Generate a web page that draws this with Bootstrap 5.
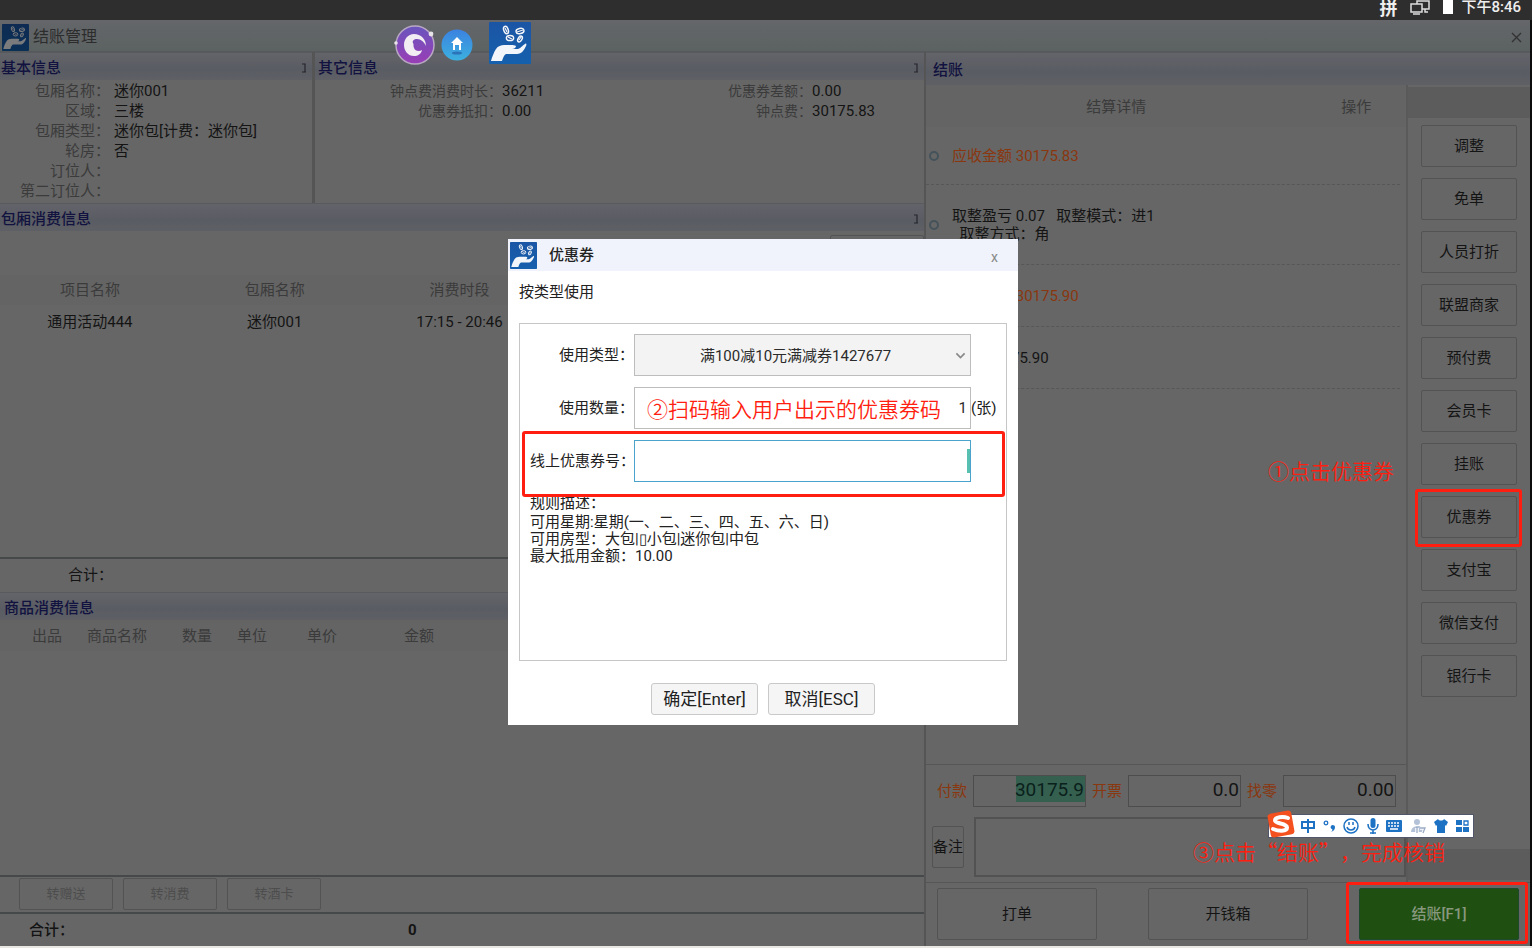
<!DOCTYPE html>
<html lang="zh-CN">
<head>
<meta charset="utf-8">
<meta name="viewport" content="width=device-width, initial-scale=1">
<title>结账管理</title>
<link href="https://cdn.jsdelivr.net/npm/bootstrap@5.3.0/dist/css/bootstrap.min.css" rel="stylesheet">
<style>
:root{--ink:#141414;--dim:#3b3b3b;--base:#666;--alert:#ff1e10}
body{font:15px/20px Roboto,"Noto Sans CJK SC",sans-serif;color:var(--ink);background:#e9e7e4}
.screen{min-height:100vh;padding-bottom:2px;position:relative}
.statusbar{height:20px;background:#2e2e2e;color:#eee;padding-right:11px;font-weight:500;line-height:14px}
.ime-flag{font-size:18px;font-weight:700;line-height:18px}
.desk{background:var(--base);border-right:2px solid #0c0c0c}
.titlebar{height:32px;background:linear-gradient(#64666a,#5c6262);border-bottom:1px solid #56595c;color:#2c2c2c;font-size:16px;padding:3px 8px 0 2px}
.titlebar .app-icon{filter:brightness(.5)}
.btn-close-x{background:none;border:0;padding:0;line-height:1;color:#333}
.workspace{display:grid;grid-template-columns:minmax(0,926fr) minmax(0,604fr)}
.left-side{border-right:2px solid #555}
.pane-head{height:28px;background:linear-gradient(#63646a,#5a5c63 60%,#5e6066);color:#11123f;font-size:15px;font-weight:500;padding:3px 5px 0 1px;border-top:1px solid #585a5e;margin:0;line-height:24px}
.info-grid{display:grid;grid-template-columns:312fr 612fr;height:151px}
.info-grid>section+section{border-left:3px solid #555}
.info-grid .other-title{padding-left:3px}
.facts{display:grid;grid-template-columns:110px 1fr;column-gap:4px;margin:0;padding-top:1px}
.facts dt{font-weight:400;text-align:right;color:var(--dim)}
.facts dd{margin:0;min-height:20px}
.facts-wide{grid-template-columns:187px 191fr 114px 109fr;column-gap:0}
.facts-wide dt{font-size:14px}
.grid-table{width:100%;table-layout:fixed;text-align:center}
.grid-table th{font-weight:400;color:var(--dim);background:#646464;padding:0}
.grid-table td{padding:0}
.room-table th{height:30px;padding-right:5px}
.room-table td{height:34px;padding-right:5px}
.goods-table th{height:31px}
.rule-top{border-top:2px solid #464949}
.room-total{padding:6px 0 7px 68px}
.dim-btn{background:#666;border:1px solid #535353;border-radius:2px;color:var(--ink);font-size:15px;line-height:20px;padding:0}
.dim-btn:hover{background:#707070}
.transfer{width:94px;height:32px;font-size:13px;color:#4d4d4d}
.pay-head{height:33px;padding:5px 0 0 7px}
.pay-body{display:grid;grid-template-columns:minmax(0,1fr) 122px}
.pay-list{border-right:2px solid #5a5a5a}
.list-head{display:grid;grid-template-columns:382fr 100fr;height:42px;line-height:44px;color:var(--dim);text-align:center;background:#646464}
.pay-item{border-bottom:1px dashed #575757;margin-right:6px;padding-left:3px;gap:13px;line-height:18px}
.item-s{height:58px}
.item-l{height:80px}
.item-m{height:62px}
.ring{width:10px;height:10px;border:2px solid #44525a;border-radius:50%;flex:none}
.accent{color:#8a370f}
.money{flex:1 1 0;background:transparent;border:1px solid #4d4d4d;border-radius:0;height:32px;padding:0 1px 3px;text-align:right;font-size:19px;color:var(--ink);min-width:0}
.money-picked{background:linear-gradient(#35604f,#35604f) right top/69px 26px no-repeat;color:#0b201c}
.pay-fields{border-top:1px solid #565656;padding:10px 10px 10px 11px;gap:6px}
.pay-fields label{flex:none}
.note{height:60px;border:2px solid #525252;border-radius:0;background:transparent;resize:none}
.note-row{padding:0 0 5px 6px;gap:10px}
.note-btn{width:32px;height:42px}
.side-menu{padding:2px 0}
.strip{height:31px;background:#5c5c5c}
.side-menu .stack{padding:7px 13px 0;gap:11px}
.side-menu .dim-btn{height:42px;width:100%}
.bottom-bar{border-top:1px solid #565656;padding:5px 11px 6px 11px}
.bottom-bar .dim-btn{width:160px;height:52px}
.bottom-bar .checkout{background:#1f5011;border-color:#1d4a2c;color:#88987f;font-weight:500}
.goods{height:354px}
.goods-actions{height:37px;padding:1px 0 0 19px;gap:10px}
.goods-total{height:34px;line-height:32px;padding-left:29px}
.goods-total span{width:379px}
.hint{position:absolute;color:var(--alert);font:350 21px/24px "Noto Sans CJK SC",sans-serif;text-spacing-trim:space-all;white-space:nowrap;z-index:5;pointer-events:none}
.frame{position:absolute;border:3px solid var(--alert);border-radius:3px;pointer-events:none;z-index:4}
.frame-coupon{inset:-7px -5px -9px -6px}
.frame-checkout{inset:-6px -9px -4px -13px}
.hint-coupon{right:calc(100% + 27px);top:-38px}
.hint-checkout{right:74px;bottom:calc(100% + 25px)}
.launcher{position:absolute;top:22px;left:393px;z-index:3}
.dialog-layer{position:absolute;inset:0;padding:16px 6px 0 0;pointer-events:none;z-index:2}
.dialog{width:510px;background:#fff;pointer-events:auto;color:#222}
.dialog header{height:32px;background:#f0f3fb;padding:0 20px 0 2px}
.dialog h1{font-size:15px;margin:0;font-weight:500;line-height:20px}
.dialog .btn-close-x{color:#888;font-size:14px;padding-top:4px}
.tab-name{padding:11px 11px 21px;line-height:20px}
.coupon-box{border:1px solid #c6c6c6;height:338px;padding:10px 0 0 10px;margin:0 11px}
.field{display:grid;grid-template-columns:104px 337px 1fr;height:42px;margin-bottom:11px;align-items:center;position:relative}
.field label{text-align:right;white-space:nowrap}
.field .form-control,.field .form-select{height:42px;border-radius:0;border-color:#bdbdbd;font-size:15px;color:#2b2b2b;text-align:right;padding:0 3px;box-shadow:none}
.field .form-select{text-align:center;text-align-last:center;background-color:#f3f3f3;background-size:11px;background-position:right 4px center;padding:2px 18px 0 4px;--bs-form-select-bg-img:url("data:image/svg+xml,%3csvg xmlns='http://www.w3.org/2000/svg' viewBox='0 0 16 16'%3e%3cpath fill='none' stroke='%23888' stroke-width='2.4' d='m2 5 6 6 6-6'/%3e%3c/svg%3e")}
.field .active-input{border-color:#4ba3cc;background:linear-gradient(#58c0b0,#58c0b0) right center/3px 24px no-repeat}
.frame-number{inset:-9px 1px -15px -8px}
.hint-number{left:117px;top:9px}
.rules-title{line-height:20px;margin:0}
.rules{line-height:17px;margin:1px 0 0}
.dialog-actions{gap:10px;padding:22px 0 10px}
.light-btn{width:107px;height:32px;background:#f5f5f5;border:1px solid #c9c9c9;border-radius:3px;font-size:17px;line-height:20px;color:#222;padding:0}
.ime{position:absolute;right:58px;bottom:110px;height:24px;width:206px;background:#fff;border:1px solid #51566a;z-index:6;padding:0 4px 0 32px}
.ime-logo{position:absolute;left:-2px;top:-5px}
</style>
</head>
<body>
<svg width="0" height="0" class="position-absolute" aria-hidden="true">
  <defs><linearGradient id="blue" x2="0" y2="1"><stop stop-color="#1b55a5"/><stop offset="1" stop-color="#1560ad"/></linearGradient></defs>
  <symbol id="hand" viewBox="0 0 42 42">
    <rect width="42" height="42" rx="1" fill="url(#blue)"/>
    <path fill="#f2f5fa" d="M2 39c1-4 3-9 5-12 2-3 5-4 8-4h7c2 0 4 0 5 1 0 2-2 3-4 3h6c3-1 5-4 7-5 1-1 2 0 1 2-2 4-4 8-9 8H17c-2 1-3 4-4 7z"/>
    <g fill="#174e99" stroke="#f2f5fa" stroke-width="1.500"><ellipse cx="17" cy="8" rx="2.200" ry="3.800" transform="rotate(-20 17 8)"/><ellipse cx="31" cy="9" rx="4" ry="2.600" transform="rotate(-12 31 9)"/><ellipse cx="21" cy="16" rx="3.600" ry="2.600"/><ellipse cx="31" cy="17" rx="1.900" ry="3.200" transform="rotate(30 31 17)"/></g>
    <path stroke="#f2f5fa" stroke-width="1.200" d="m16 6 2 4m10 0 6-2m-15 7 4 2m7 1 2-3"/>
  </symbol>
  <symbol id="pin" viewBox="0 0 6 10"><path fill="none" stroke="#25262d" stroke-width="1.200" d="M1 1h3v8M1 9h4"/></symbol>
</svg>
<div class="screen d-flex flex-column">
  <div class="statusbar d-flex justify-content-end align-items-start flex-shrink-0">
    <span class="ime-flag me-2 pe-1">拼</span>
    <svg class="me-2 pe-1" width="26" height="16" viewBox="0 0 22 16" fill="#2e2e2e" stroke="#ddd" stroke-width="1.500"><path d="M8 1h12v8H8zM16 9v3h3"/><path d="M2 4h11v8H2zM4 14h7"/></svg>
    <svg class="me-2" width="10" height="14"><path fill="#fff" d="M0 0h10v14H0z"/></svg>
    <span>下午8:46</span>
  </div>
  <div class="desk flex-grow-1 d-flex flex-column">
    <div class="titlebar d-flex align-items-center flex-shrink-0">
      <svg width="27" height="27" class="app-icon me-1"><use href="#hand"/></svg><span>结账管理</span>
      <button class="btn-close-x ms-auto" type="button" aria-label="关闭"><svg width="11" height="11" viewBox="0 0 11 11" stroke="#333" stroke-width="1.400"><path d="m1 1 9 9m0-9-9 9"/></svg></button>
    </div>
    <div class="workspace flex-grow-1">
      <div class="left-side d-flex flex-column">
        <div class="info-grid">
          <section>
            <h2 class="pane-head d-flex align-items-center justify-content-between">基本信息 <svg width="6" height="10"><use href="#pin"/></svg></h2>
            <dl class="facts">
              <dt>包厢名称：</dt><dd>迷你001</dd><dt>区域：</dt><dd>三楼</dd><dt>包厢类型：</dt><dd>迷你包[计费：迷你包]</dd><dt>轮房：</dt><dd>否</dd><dt>订位人：</dt><dd></dd><dt>第二订位人：</dt><dd></dd>
            </dl>
          </section>
          <section>
            <h2 class="pane-head other-title d-flex align-items-center justify-content-between">其它信息 <svg width="6" height="10"><use href="#pin"/></svg></h2>
            <dl class="facts facts-wide">
              <dt>钟点费消费时长：</dt><dd>36211</dd><dt>优惠券差额：</dt><dd>0.00</dd><dt>优惠券抵扣：</dt><dd>0.00</dd><dt>钟点费：</dt><dd>30175.83</dd>
            </dl>
          </section>
        </div>
        <section class="d-flex flex-column flex-grow-1">
          <h2 class="pane-head d-flex align-items-center justify-content-between">包厢消费信息 <svg width="6" height="10"><use href="#pin"/></svg></h2>
          <div class="d-flex justify-content-end pt-1 pb-2"><button type="button" class="dim-btn transfer" aria-label="明细"></button></div>
          <table class="grid-table room-table">
            <thead><tr><th>项目名称</th><th>包厢名称</th><th>消费时段</th><th></th><th></th></tr></thead>
            <tbody><tr><td>通用活动444</td><td>迷你001</td><td>17:15 - 20:46</td><td></td><td></td></tr></tbody>
          </table>
          <div class="rule-top room-total mt-auto">合计：</div>
        </section>
        <section class="d-flex flex-column goods">
          <h2 class="pane-head ps-1">商品消费信息</h2>
          <table class="grid-table goods-table">
            <colgroup><col width="20"><col width="54"><col width="86"><col width="74"><col width="36"><col width="104"><col width="90"><col></colgroup>
            <thead><tr><th></th><th>出品</th><th>商品名称</th><th>数量</th><th>单位</th><th>单价</th><th>金额</th><th></th></tr></thead>
          </table>
          <div class="rule-top goods-actions d-flex mt-auto">
            <button type="button" class="dim-btn transfer">转赠送</button><button type="button" class="dim-btn transfer">转消费</button><button type="button" class="dim-btn transfer">转酒卡</button>
          </div>
          <div class="rule-top goods-total d-flex fw-medium"><span>合计：</span><b>0</b></div>
        </section>
      </div>
      <div class="d-flex flex-column">
        <h2 class="pane-head pay-head">结账</h2>
        <div class="pay-body flex-grow-1">
          <div class="pay-list d-flex flex-column">
            <div class="list-head"><span>结算详情</span><span>操作</span></div>
            <div class="pay-item item-s d-flex align-items-center accent"><i class="ring"></i><span>应收金额 30175.83</span></div>
            <div class="pay-item item-l d-flex align-items-center"><i class="ring"></i><span>取整盈亏 0.07 &nbsp; 取整模式：进1<br>&nbsp; 取整方式：角</span></div>
            <div class="pay-item item-m d-flex align-items-center accent"><i class="ring"></i><span>实收金额 30175.90</span></div>
            <div class="pay-item item-m d-flex align-items-center"><i class="ring"></i><span>未付 30175.90</span></div>
            <div class="mt-auto">
              <div class="pay-fields d-flex align-items-center">
                <label for="paid" class="accent">付款</label><input id="paid" class="money money-picked" value="30175.9">
                <label for="inv" class="accent">开票</label><input id="inv" class="money" value="0.0">
                <label for="chg" class="accent">找零</label><input id="chg" class="money" value="0.00">
              </div>
              <div class="note-row d-flex align-items-center">
                <button type="button" class="dim-btn note-btn">备注</button>
                <textarea class="note flex-grow-1" aria-label="备注内容"></textarea>
              </div>
            </div>
          </div>
          <nav class="side-menu d-flex flex-column">
            <div class="strip"></div>
            <div class="stack d-flex flex-column">
              <button type="button" class="dim-btn">调整</button>
              <button type="button" class="dim-btn">免单</button>
              <button type="button" class="dim-btn">人员打折</button>
              <button type="button" class="dim-btn">联盟商家</button>
              <button type="button" class="dim-btn">预付费</button>
              <button type="button" class="dim-btn">会员卡</button>
              <button type="button" class="dim-btn">挂账</button>
              <div class="position-relative"><button type="button" class="dim-btn">优惠券</button><span class="frame frame-coupon"></span><span class="hint hint-coupon">①点击优惠券</span></div>
              <button type="button" class="dim-btn">支付宝</button>
              <button type="button" class="dim-btn">微信支付</button>
              <button type="button" class="dim-btn">银行卡</button>
            </div>
            <div class="strip mt-auto"></div>
          </nav>
        </div>
        <div class="bottom-bar d-flex justify-content-between">
          <button type="button" class="dim-btn">打单</button>
          <button type="button" class="dim-btn">开钱箱</button>
          <div class="position-relative"><button type="button" class="dim-btn checkout">结账[F1]</button><span class="frame frame-checkout"></span><span class="hint hint-checkout">③点击“结账”，完成核销</span></div>
        </div>
      </div>
    </div>
  </div>

  <div class="launcher d-flex align-items-center">
    <svg width="44" height="44" viewBox="0 0 44 44"><defs><linearGradient id="pu" x2="0" y2="1"><stop stop-color="#6a55bd"/><stop offset="1" stop-color="#9a3db5"/></linearGradient></defs><circle cx="22" cy="22" r="19" fill="url(#pu)" stroke="#b9a8c4" stroke-width="1.500"/><path fill="#f1edf3" d="M33 23c0-7-5-12-12-12-6 0-10 5-10 11s4 11 10 11c4 0 7-2 8-6-3 2-7 1-8-2-1-2 0-4-1-5-1-2 1-4 4-4 4 0 7 3 9 7z"/><circle cx="38" cy="11" r="2.400" fill="#e8e4ea"/><circle cx="3" cy="20" r="1.800" fill="#e8e4ea"/></svg>
    <svg class="ms-1" width="32" height="32" viewBox="0 0 32 32"><defs><linearGradient id="sky" x2="0" y2="1"><stop stop-color="#3b82e0"/><stop offset="1" stop-color="#3cb0df"/></linearGradient></defs><circle cx="16" cy="16" r="15.500" fill="url(#sky)"/><path fill="#fff" d="m16 8 6 6h-2v7h-2v-5h-4v5h-2v-7h-2z"/><ellipse cx="16" cy="24" rx="5" ry="1.500" fill="#2b74b8"/></svg>
    <svg class="ms-3 mb-1" width="42" height="42"><use href="#hand"/></svg>
  </div>

  <div class="dialog-layer d-flex align-items-center justify-content-center">
    <form class="dialog" role="dialog" aria-labelledby="dlg">
      <header class="d-flex align-items-center"><svg width="27" height="27"><use href="#hand"/></svg><h1 id="dlg" class="ms-2 ps-1">优惠券</h1><button type="button" class="btn-close-x ms-auto" aria-label="关闭">x</button></header>
      <div class="tab-name">按类型使用</div>
      <div class="coupon-box">
        <div class="field"><label for="kind">使用类型：</label><select id="kind" class="form-select"><option>满100减10元满减券1427677</option></select></div>
        <div class="field"><label for="qty">使用数量：</label><input id="qty" class="form-control" value="1"><span>(张)</span><span class="hint hint-number">②扫码输入用户出示的优惠券码</span></div>
        <div class="field"><label for="code">线上优惠券号：</label><input id="code" class="form-control active-input"><span class="frame frame-number"></span></div>
        <p class="rules-title">规则描述：</p>
        <p class="rules">可用星期:星期(一、二、三、四、五、六、日)<br>可用房型：大包|▯小包|迷你包|中包<br>最大抵用金额：10.00</p>
      </div>
      <div class="dialog-actions d-flex justify-content-center"><button type="submit" class="light-btn">确定[Enter]</button><button type="button" class="light-btn">取消[ESC]</button></div>
    </form>
  </div>

  <div class="ime d-flex align-items-center justify-content-between">
    <svg class="ime-logo" width="28" height="28" viewBox="0 0 28 28"><rect x="2" y="2" width="24" height="24" rx="3" fill="#f4511e" transform="rotate(-10 14 14)"/><path fill="none" stroke="#fff" stroke-width="4" stroke-linecap="round" d="M21 8c-5-2-13-1-13 2.500S20 13 20 17.500 11 21 6 19"/></svg>
    <svg width="14" height="16" viewBox="0 0 14 16" fill="none" stroke="#1d72c4" stroke-width="2"><path d="M1 4h12v6H1zM7 1v14"/></svg>
    <svg width="13" height="14" viewBox="0 0 13 14"><circle cx="3" cy="4" r="1.800" fill="none" stroke="#1d72c4" stroke-width="1.300"/><path fill="#1d72c4" d="M8 7c1-2 4-1 4 1s-1 4-4 5c1-1 2-2 1-3-1 0-2-2-1-3z"/></svg>
    <svg width="16" height="16" viewBox="0 0 16 16" fill="none" stroke="#1d72c4" stroke-width="1.500"><circle cx="8" cy="8" r="7"/><path d="M4 9c1 4 7 4 8 0M6 4v3m4-3v3"/></svg>
    <svg width="12" height="16" viewBox="0 0 12 16"><rect x="3.500" width="5" height="10" rx="2.500" fill="#1d72c4"/><path fill="none" stroke="#1d72c4" stroke-width="1.600" d="M1 6c0 8 10 8 10 0M6 12v4M3 15h6"/></svg>
    <svg width="16" height="12" viewBox="0 0 16 12"><rect width="16" height="12" rx="1" fill="#1d72c4"/><path stroke="#fff" stroke-width="1.500" stroke-dasharray="2 1" d="M2 3h12M2 6h12"/><path stroke="#fff" stroke-width="1.500" d="M4 9h8"/></svg>
    <svg width="17" height="16" viewBox="0 0 17 16"><circle cx="7" cy="4" r="3" fill="#b4c2d8"/><path fill="#b4c2d8" d="M1 14c0-7 12-8 12-2v2z"/><path fill="none" stroke="#fff" stroke-width="3.500" d="M7 10v6m3-6h5l-2 6"/><path fill="none" stroke="#9aaac4" stroke-width="1.300" d="M7 9v6m3-5h5l-2 5"/></svg>
    <svg width="14" height="14" viewBox="0 0 14 14"><path fill="#1d72c4" d="M4 0c1 2 5 2 6 0l4 3-2 4-1-1v8H3V6L2 7 0 3z"/></svg>
    <svg width="13" height="14" viewBox="0 0 13 14" fill="#1d72c4"><path d="M0 1h6v5H0zM0 8h6v5H0zm7 0h6v5H7z"/><path fill="none" stroke="#1d72c4" stroke-width="1.300" d="M8 2h4v4H8z"/></svg>
  </div>
</div>
<script src="https://cdn.jsdelivr.net/npm/bootstrap@5.3.0/dist/js/bootstrap.bundle.min.js"></script>
</body>
</html>
